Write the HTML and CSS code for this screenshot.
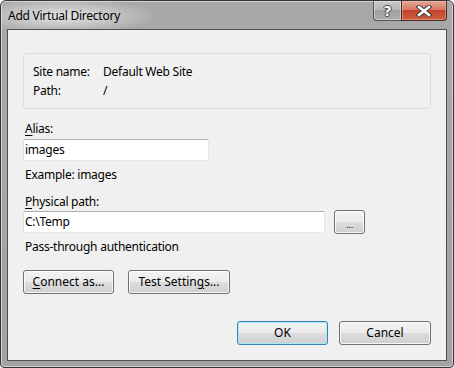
FILE: index.html
```html
<!DOCTYPE html>
<html>
<head>
<meta charset="utf-8">
<title>Add Virtual Directory</title>
<link rel="stylesheet" href="styles.css">
</head>
<body>
<div class="window">
  <div class="titlebar">
    <span class="title">Add Virtual Directory</span>
    <div class="caption">
      <div class="cbtn help"><span class="glyph">?</span></div>
      <div class="cbtn close">
        <svg width="18" height="12" viewBox="0 0 18 12"><path d="M4 2 L14 10 M14 2 L4 10" stroke="#3a3a3a" stroke-width="4.6" stroke-linecap="square"/><path d="M4 2 L14 10 M14 2 L4 10" stroke="#fff" stroke-width="2.6" stroke-linecap="square"/></svg>
      </div>
    </div>
  </div>
  <div class="client">
    <div class="info">
      <div class="info-row"><span class="key">Site name:</span><span>Default Web Site</span></div>
      <div class="info-row"><span class="key">Path:</span><span>/</span></div>
    </div>
    <div class="label alias-label"><u>A</u>lias:</div>
    <div class="input alias">images</div>
    <div class="hint">Example: images</div>
    <div class="label path-label"><u>P</u>hysical path:</div>
    <div class="path-row">
      <div class="input path">C:\Temp</div>
      <button class="btn browse">...</button>
    </div>
    <div class="auth">Pass-through authentication</div>
    <div class="action-row">
      <button class="btn connect"><u>C</u>onnect as...</button>
      <button class="btn test">Test Settin<u>g</u>s...</button>
    </div>
    <div class="dialog-row">
      <button class="btn ok">OK</button>
      <button class="btn cancel">Cancel</button>
    </div>
  </div>
</div>
</body>
</html>
```
FILE: styles.css
```css
html, body {
  margin: 0;
  padding: 0;
}
body {
  background: #ffffff;
  font-family: "Noto Sans", "Open Sans", sans-serif;
  font-size: 12px;
  letter-spacing: -0.25px;
  color: #000;
}
.window {
  width: 454px;
  height: 368px;
  box-sizing: border-box;
  border: 1px solid #363636;
  border-radius: 6px 6px 4px 4px;
  background: linear-gradient(#a8a8a8, #a3a3a3);
  box-shadow: inset 0 0 0 1px rgba(255,255,255,0.5);
  display: flex;
  flex-direction: column;
  padding: 0 6px 6px;
}
.titlebar {
  height: 28px;
  flex: none;
  display: flex;
  align-items: flex-start;
  background: radial-gradient(ellipse 95px 18px at 62px 15px, rgba(235,235,235,0.9), rgba(235,235,235,0) 100%);
  margin: 0 -6px;
  padding: 0 6px;
}
.title {
  margin-top: 7px;
  padding-left: 1px;
  line-height: 16px;
  color: #000;
}
.caption {
  margin-left: auto;
  display: flex;
}
.cbtn {
  height: 20px;
  box-sizing: border-box;
  border: 1px solid #555;
  border-top: none;
  display: flex;
  align-items: center;
  justify-content: center;
}
.help {
  width: 28px;
  border-radius: 0 0 0 4px;
  border-right: none;
  background: linear-gradient(#c8c8c8 0%, #b8b8b8 45%, #a0a0a0 50%, #acacac 100%);
  box-shadow: inset 0 0 0 1px rgba(255,255,255,0.4);
}
.glyph {
  font-family: "DejaVu Sans", sans-serif;
  font-weight: bold;
  font-size: 14px;
  color: #fff;
  line-height: 14px;
  text-shadow: 1px 0 0 #444, -1px 0 0 #444, 0 1px 0 #444, 0 -1px 0 #444;
}
.close {
  width: 46px;
  border-radius: 0 0 4px 0;
  border-color: #4a2a22;
  background: linear-gradient(#e3a895 0%, #d67a62 45%, #c2432a 50%, #d0603f 100%);
  box-shadow: inset 0 0 0 1px rgba(255,220,200,0.35);
}
.client {
  flex: 1;
  border: 1px solid #4f4f4f;
  background: #f0f0f0;
  padding: 23px 15px 14px;
  display: flex;
  flex-direction: column;
  align-items: flex-start;
}
.info {
  align-self: stretch;
  border: 1px solid #d6dfe6;
  border-radius: 3px;
  padding: 8px 9px;
}
.info-row {
  display: flex;
  line-height: 19px;
}
.key {
  width: 70px;
}
.label, .hint, .auth {
  line-height: 15px;
}
.label u {
  text-decoration-thickness: 1px;
  text-underline-offset: 2px;
}
.alias-label {
  margin-top: 12px;
  padding-left: 2px;
}
.input {
  box-sizing: border-box;
  height: 22px;
  border: 1px solid;
  border-color: #abadb3 #e2e3ea #e3e9ef #dbdfe6;
  border-radius: 2px;
  background: #fff;
  padding: 0 1px;
  line-height: 20px;
}
.alias {
  margin-top: 3px;
  width: 186px;
}
.hint {
  margin-top: 6px;
  padding-left: 2px;
}
.path-label {
  margin-top: 12px;
  padding-left: 2px;
}
.path-row {
  margin-top: 1px;
  display: flex;
  align-items: center;
  gap: 9px;
}
.path {
  width: 302px;
}
.auth {
  margin-top: 5px;
  padding-left: 2px;
}
.btn {
  font: inherit;
  color: #000;
  height: 24px;
  box-sizing: border-box;
  border: 1px solid #707070;
  border-radius: 3px;
  background: linear-gradient(#f3f3f3 0%, #ebebeb 48%, #dddddd 52%, #cfcfcf 100%);
  box-shadow: inset 0 0 0 1px rgba(255,255,255,0.8);
  padding: 0;
  line-height: 20px;
}
.btn u {
  text-underline-offset: 2px;
}
.browse {
  width: 31px;
  font-size: 9px;
  letter-spacing: 0;
  line-height: 24px;
  padding-top: 2px;
}
.action-row {
  margin-top: 16px;
  display: flex;
  gap: 14px;
}
.connect {
  width: 91px;
}
.test {
  width: 102px;
}
.dialog-row {
  margin-top: 27px;
  align-self: flex-end;
  display: flex;
  gap: 11px;
}
.ok {
  width: 91px;
  border-color: #3c7fb1;
  box-shadow: inset 0 0 0 1px #a8e8fb;
}
.cancel {
  width: 92px;
}
```
